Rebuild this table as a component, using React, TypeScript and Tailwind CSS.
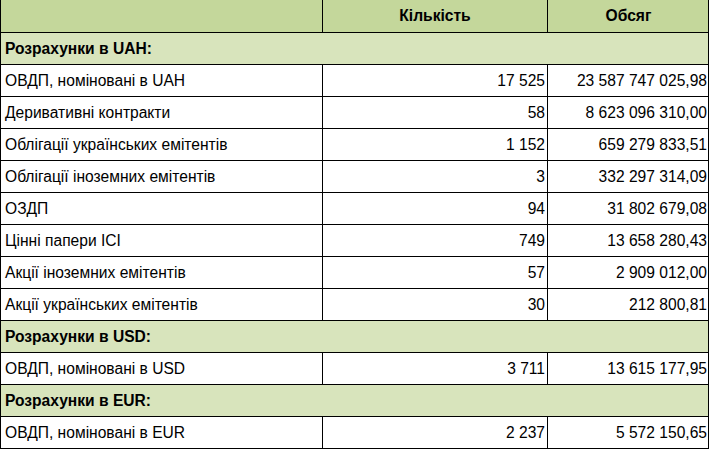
const rows: Array<{ section: string } | { label: string; count: string; volume: string }> = [
  { section: 'Розрахунки в UAH:' },
  { label: 'ОВДП, номіновані в UAH', count: '17 525', volume: '23 587 747 025,98' },
  { label: 'Деривативні контракти', count: '58', volume: '8 623 096 310,00' },
  { label: 'Облігації українських емітентів', count: '1 152', volume: '659 279 833,51' },
  { label: 'Облігації іноземних емітентів', count: '3', volume: '332 297 314,09' },
  { label: 'ОЗДП', count: '94', volume: '31 802 679,08' },
  { label: 'Цінні папери ІСІ', count: '749', volume: '13 658 280,43' },
  { label: 'Акції іноземних емітентів', count: '57', volume: '2 909 012,00' },
  { label: 'Акції українських емітентів', count: '30', volume: '212 800,81' },
  { section: 'Розрахунки в USD:' },
  { label: 'ОВДП, номіновані в USD', count: '3 711', volume: '13 615 177,95' },
  { section: 'Розрахунки в EUR:' },
  { label: 'ОВДП, номіновані в EUR', count: '2 237', volume: '5 572 150,65' },
]

const cols = 'grid grid-cols-[322px_225px_161px]'

export default function App() {
  return (
    <div className="w-[710px] h-[449px] bg-white text-black text-[15.6px] leading-none" style={{ fontFamily: '"Liberation Sans", Arial, sans-serif' }}>
      <div className="w-[709px] border-l border-r border-black">
        <div className={`${cols} h-[33px] bg-[#c4d79b] border-b border-black font-bold`}>
          <div className="border-r border-black" />
          <div className="flex items-center justify-center border-r border-black">Кількість</div>
          <div className="flex items-center justify-center">Обсяг</div>
        </div>
        {rows.map((row, i) =>
          'section' in row ? (
            <div key={i} className="h-[32px] flex items-center px-[4px] pt-[1px] bg-[#d8e4bc] border-b border-black font-bold">
              {row.section}
            </div>
          ) : (
            <div key={i} className={`${cols} h-[32px] border-b border-black`}>
              <div className="flex items-center px-[4px] pt-[1px] border-r border-black">{row.label}</div>
              <div className="flex items-center justify-end pr-[2px] pt-[1px] border-r border-black">{row.count}</div>
              <div className="flex items-center justify-end pr-[2px] pt-[1px]">{row.volume}</div>
            </div>
          ),
        )}
      </div>
    </div>
  )
}
